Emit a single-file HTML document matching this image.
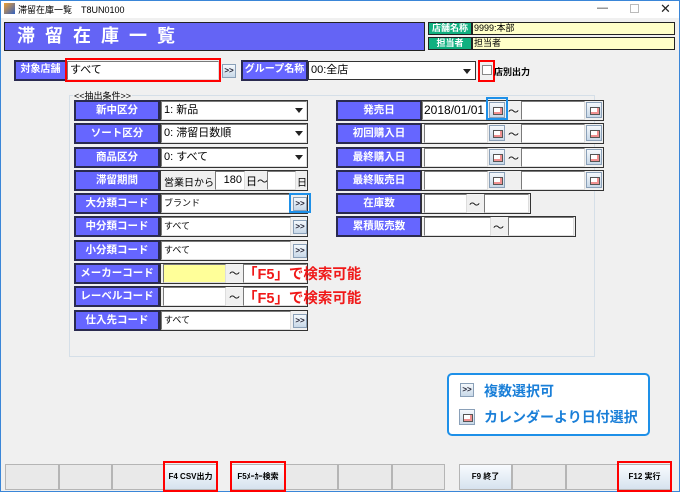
<!DOCTYPE html>
<html><head><meta charset="utf-8"><style>
*{box-sizing:border-box;margin:0;padding:0}
body{width:680px;height:492px;position:relative;background:#f0f0f0;font-family:"Liberation Sans","Noto Sans CJK JP",sans-serif;font-size:11px;overflow:hidden;color:#000}
.a{position:absolute}
.lbl{position:absolute;background:#6666ff;border:2px solid #2a2a50;color:#fff;font-weight:bold;text-align:center;font-size:10.5px;line-height:16px;height:21px}
.fld{position:absolute;border:1px solid #333;background:#f0f0f0;height:21px}
.inp{position:absolute;background:#fff;border:1px solid #7a7a7a;border-right-color:#ddd;border-bottom-color:#ddd;height:19px;font-size:11px;line-height:17px;padding-left:2px;white-space:nowrap;overflow:hidden}
.btn{position:absolute;width:14px;height:14px;background:linear-gradient(#f4f8fc,#c8d8e8);border:1px solid #8aa0b8;font-size:8px;font-weight:bold;text-align:center;line-height:12px;color:#223}
.cal{position:absolute;width:16px;height:16px;background:linear-gradient(#f4f8fc,#c8d8e8);border:1px solid #8aa0b8}
.cal:after{content:"";position:absolute;left:3px;top:4px;width:8px;height:6px;border:1px solid #555;background:#fff;box-shadow:inset -2px -2px 0 #f09090}
.dd{position:absolute;width:0;height:0;border-left:4px solid transparent;border-right:4px solid transparent;border-top:5px solid #222}
.fk{position:absolute;top:464px;height:26px;background:#e9e9e9;border:1px solid #b5b5b5;font-size:8px;font-weight:bold;text-align:center;line-height:24px}
.fk.on{background:linear-gradient(#f8fbfe,#d6e2ee)}
.red{position:absolute;border:2px solid #f00}
.blu{position:absolute;border:2px solid #1e90e8}
</style></head><body>
<div class="a" style="left:0;top:0;width:680px;height:492px;border:1px solid #3a86d8"></div>
<div class="a" style="left:1px;top:1px;width:678px;height:17px;background:#fff"></div>
<div class="a" style="left:4px;top:3px;width:11px;height:11px;background:linear-gradient(135deg,#f0a030,#3060c0)"></div>
<div class="a" style="left:18px;top:3px;font-size:9px">滞留在庫一覧　T8UN0100</div>
<div class="a" style="left:597px;top:2px;font-size:11px;color:#333">—</div>
<div class="a" style="left:630px;top:4px;width:9px;height:9px;border:1px solid #bbb"></div>
<div class="a" style="left:660px;top:1px;font-size:13px;color:#222">✕</div>

<div class="a" style="left:4px;top:22px;width:421px;height:29px;background:#6464f5;border:1px solid #222;color:#fff;font-weight:bold;font-size:18px;line-height:27px;padding-left:12px;letter-spacing:10px">滞留在庫一覧</div>
<div class="a" style="left:428px;top:22px;width:44px;height:13px;background:#10b080;border:1px solid #222;color:#fff;font-size:9px;text-align:center;line-height:11px;font-weight:bold">店舗名称</div>
<div class="a" style="left:472px;top:22px;width:203px;height:13px;background:#ffffc8;border:1px solid #222;font-size:9px;line-height:11px;padding-left:1px">9999:本部</div>
<div class="a" style="left:428px;top:37px;width:44px;height:13px;background:#10b080;border:1px solid #222;color:#fff;font-size:9px;text-align:center;line-height:11px;font-weight:bold">担当者</div>
<div class="a" style="left:472px;top:37px;width:203px;height:13px;background:#ffffc8;border:1px solid #222;font-size:9px;line-height:11px;padding-left:1px">担当者</div>

<div class="lbl" style="left:14px;top:60px;width:53px;font-size:10px">対象店舗</div>
<div class="inp" style="left:67px;top:61px;width:152px">すべて</div>
<div class="red" style="left:65px;top:58px;width:156px;height:24px"></div>
<div class="btn" style="left:222px;top:64px">&gt;&gt;</div>
<div class="lbl" style="left:241px;top:60px;width:67px;font-size:10px">グループ名称</div>
<div class="inp" style="left:308px;top:61px;width:168px;border:1px solid #333">00:全店</div>
<div class="dd" style="left:463px;top:69px"></div>
<div class="a" style="left:482px;top:65px;width:10px;height:10px;background:#fff;border:1px solid #888"></div>
<div class="red" style="left:478px;top:60px;width:17px;height:22px"></div>
<div class="a" style="left:494px;top:65px;font-size:9px;font-weight:bold">店別出力</div>

<div class="a" style="left:69px;top:95px;width:526px;height:262px;border:1px solid #d5dfe8"></div>
<div class="a" style="left:73px;top:89px;background:#f0f0f0;font-size:9px;padding:0 1px">&lt;&lt;抽出条件&gt;&gt;</div>

<div class="lbl" style="left:74px;top:100px;width:86px">新中区分</div>
<div class="fld" style="left:160px;top:100px;width:148px"></div><div class="inp" style="left:161px;top:101px;width:146px">1: 新品</div><div class="dd" style="left:295px;top:108px"></div>
<div class="lbl" style="left:74px;top:123px;width:86px">ソート区分</div>
<div class="fld" style="left:160px;top:123px;width:148px"></div><div class="inp" style="left:161px;top:124px;width:146px">0: 滞留日数順</div><div class="dd" style="left:295px;top:131px"></div>
<div class="lbl" style="left:74px;top:147px;width:86px">商品区分</div>
<div class="fld" style="left:160px;top:147px;width:148px"></div><div class="inp" style="left:161px;top:148px;width:146px">0: すべて</div><div class="dd" style="left:295px;top:155px"></div>
<div class="lbl" style="left:74px;top:170px;width:86px">滞留期間</div>
<div class="fld" style="left:160px;top:170px;width:148px"></div>
<div class="a" style="left:164px;top:174px;font-size:10px">営業日から</div>
<div class="inp" style="left:215px;top:171px;width:30px;text-align:right;padding-right:2px;font-size:11px">180</div>
<div class="a" style="left:246px;top:173px;font-size:11px">日〜</div>
<div class="inp" style="left:267px;top:171px;width:29px"></div>
<div class="a" style="left:297px;top:174px;font-size:10px">日</div>
<div class="lbl" style="left:74px;top:193px;width:86px">大分類コード</div>
<div class="fld" style="left:160px;top:193px;width:148px"></div><div class="inp" style="left:161px;top:194px;width:130px;font-size:9px">ブランド</div><div class="btn" style="left:293px;top:197px">&gt;&gt;</div>
<div class="blu" style="left:289px;top:193px;width:22px;height:20px"></div>
<div class="lbl" style="left:74px;top:216px;width:86px">中分類コード</div>
<div class="fld" style="left:160px;top:216px;width:148px"></div><div class="inp" style="left:161px;top:217px;width:130px;font-size:9px">すべて</div><div class="btn" style="left:293px;top:220px">&gt;&gt;</div>
<div class="lbl" style="left:74px;top:240px;width:86px">小分類コード</div>
<div class="fld" style="left:160px;top:240px;width:148px"></div><div class="inp" style="left:161px;top:241px;width:130px;font-size:9px">すべて</div><div class="btn" style="left:293px;top:244px">&gt;&gt;</div>
<div class="lbl" style="left:74px;top:263px;width:86px">メーカーコード</div>
<div class="fld" style="left:160px;top:263px;width:148px"></div><div class="inp" style="left:163px;top:264px;width:63px;background:#ffff99"></div><div class="a" style="left:229px;top:265px">〜</div><div class="inp" style="left:243px;top:264px;width:64px"></div>
<div class="lbl" style="left:74px;top:286px;width:86px">レーベルコード</div>
<div class="fld" style="left:160px;top:286px;width:148px"></div><div class="inp" style="left:163px;top:287px;width:63px"></div><div class="a" style="left:229px;top:289px">〜</div><div class="inp" style="left:243px;top:287px;width:64px"></div>
<div class="lbl" style="left:74px;top:310px;width:86px">仕入先コード</div>
<div class="fld" style="left:160px;top:310px;width:148px"></div><div class="inp" style="left:161px;top:311px;width:130px;font-size:9px">すべて</div><div class="btn" style="left:293px;top:314px">&gt;&gt;</div>
<div class="a" style="left:243px;top:263px;color:#f01818;font-weight:bold;font-size:14.5px;white-space:nowrap">「F5」で検索可能</div>
<div class="a" style="left:243px;top:287px;color:#f01818;font-weight:bold;font-size:14.5px;white-space:nowrap">「F5」で検索可能</div>

<div class="lbl" style="left:336px;top:100px;width:86px">発売日</div>
<div class="fld" style="left:421px;top:100px;width:183px"></div><div class="inp" style="left:422px;top:101px;width:66px;font-size:12px;padding-left:1px">2018/01/01</div><div class="cal" style="left:489px;top:102px"></div><div class="a" style="left:508px;top:103px">〜</div><div class="inp" style="left:521px;top:101px;width:64px"></div><div class="cal" style="left:586px;top:102px"></div>
<div class="blu" style="left:486px;top:97px;width:22px;height:23px"></div>
<div class="lbl" style="left:336px;top:123px;width:86px">初回購入日</div>
<div class="fld" style="left:421px;top:123px;width:183px"></div><div class="inp" style="left:424px;top:124px;width:64px"></div><div class="cal" style="left:489px;top:125px"></div><div class="a" style="left:508px;top:126px">〜</div><div class="inp" style="left:521px;top:124px;width:64px"></div><div class="cal" style="left:586px;top:125px"></div>
<div class="lbl" style="left:336px;top:147px;width:86px">最終購入日</div>
<div class="fld" style="left:421px;top:147px;width:183px"></div><div class="inp" style="left:424px;top:148px;width:64px"></div><div class="cal" style="left:489px;top:149px"></div><div class="a" style="left:508px;top:150px">〜</div><div class="inp" style="left:521px;top:148px;width:64px"></div><div class="cal" style="left:586px;top:149px"></div>
<div class="lbl" style="left:336px;top:170px;width:86px">最終販売日</div>
<div class="fld" style="left:421px;top:170px;width:183px"></div><div class="inp" style="left:424px;top:171px;width:64px"></div><div class="cal" style="left:489px;top:172px"></div><div class="inp" style="left:521px;top:171px;width:64px"></div><div class="cal" style="left:586px;top:172px"></div>
<div class="lbl" style="left:336px;top:193px;width:86px">在庫数</div>
<div class="fld" style="left:421px;top:193px;width:110px"></div><div class="inp" style="left:424px;top:194px;width:43px"></div><div class="a" style="left:469px;top:196px">〜</div><div class="inp" style="left:484px;top:194px;width:45px"></div>
<div class="lbl" style="left:336px;top:216px;width:86px">累積販売数</div>
<div class="fld" style="left:421px;top:216px;width:155px"></div><div class="inp" style="left:424px;top:217px;width:67px"></div><div class="a" style="left:493px;top:219px">〜</div><div class="inp" style="left:508px;top:217px;width:66px"></div>

<div class="a" style="left:447px;top:373px;width:203px;height:63px;border:2px solid #1e90e8;border-radius:5px;background:#fff"></div>
<div class="btn" style="left:460px;top:383px">&gt;&gt;</div>
<div class="a" style="left:484px;top:381px;color:#1a7fd8;font-size:14px;font-weight:bold">複数選択可</div>
<div class="cal" style="left:459px;top:409px"></div>
<div class="a" style="left:484px;top:407px;color:#1a7fd8;font-size:14px;font-weight:bold;white-space:nowrap">カレンダーより日付選択</div>

<div class="fk" style="left:5px;width:54px"></div>
<div class="fk" style="left:59px;width:53px"></div>
<div class="fk" style="left:112px;width:52px"></div>
<div class="fk on" style="left:164px;width:53px">F4 CSV出力</div>
<div class="fk on" style="left:231px;width:54px">F5ﾒｰｶｰ検索</div>
<div class="fk" style="left:285px;width:53px"></div>
<div class="fk" style="left:338px;width:54px"></div>
<div class="fk" style="left:392px;width:53px"></div>
<div class="fk on" style="left:459px;width:53px">F9 終了</div>
<div class="fk" style="left:512px;width:54px"></div>
<div class="fk" style="left:566px;width:52px"></div>
<div class="fk on" style="left:618px;width:53px">F12 実行</div>
<div class="red" style="left:163px;top:461px;width:55px;height:31px"></div>
<div class="red" style="left:230px;top:461px;width:56px;height:31px"></div>
<div class="red" style="left:617px;top:461px;width:55px;height:31px"></div>
</body></html>
